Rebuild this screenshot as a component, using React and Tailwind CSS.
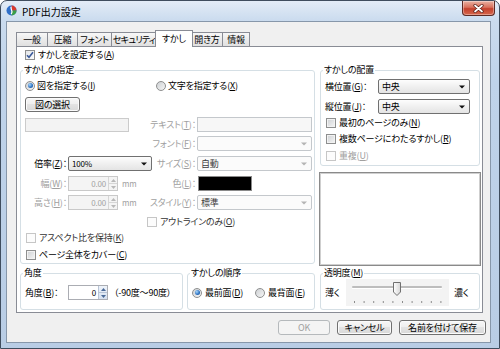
import React from 'react';

const FONT = "font-['Noto_Sans_CJK_JP',sans-serif] [font-feature-settings:'palt']";

// label with underlined access key, e.g. すかしを設定する(A)
const Mn = ({ t, k, colon }) => (
  <>
    {t}(<span className="underline underline-offset-[1px]">{k}</span>){colon ? '：' : ''}
  </>
);

// right aligned label that may overflow to the left
const Lbl = ({ className, children }) => (
  <div className={`flex shrink-0 justify-end leading-[12px] ${className}`}>
    <span className="shrink-0">{children}</span>
  </div>
);

const Check = ({ on, dim }) => (
  <span
    className={`flex h-[10px] w-[10px] shrink-0 items-center justify-center border ${
      dim
        ? 'border-[#c6c6c6] bg-[#fcfcfc]'
        : on
        ? 'border-[#8e8f8f] bg-[linear-gradient(135deg,#e4e6e8,#fbfbfb)]'
        : 'border-[#8e8f8f] bg-[linear-gradient(135deg,#cdd0d3,#f6f6f6)] shadow-[inset_0_0_0_1px_#f2f2f2]'
    }`}
  >
    {on && (
      <svg width="8" height="8" viewBox="0 0 8 8">
        <path d="M1 4.2 L3 6.3 L7 1.3" stroke="#3b5a9a" strokeWidth="1.6" fill="none" />
      </svg>
    )}
  </span>
);

const Radio = ({ on }) => (
  <span className="flex h-[10px] w-[10px] shrink-0 items-center justify-center rounded-full border border-[#8e8f8f] bg-[linear-gradient(135deg,#cdd0d3,#f6f6f6)]">
    {on && (
      <span className="h-[5px] w-[5px] rounded-full bg-[radial-gradient(circle_at_35%_35%,#a6d6fb,#2a6fc0_60%,#1b4f8f)]" />
    )}
  </span>
);

const Btn = ({ className, dim, children }) => (
  <div
    className={`flex h-[15px] items-center justify-center rounded-[3px] border leading-[12px] ${
      dim
        ? 'border-[#b5b9bc] bg-[#f4f4f4] text-[#a0a0a0]'
        : 'border-[#707070] bg-[linear-gradient(#f7f7f7,#efefef_45%,#e3e3e3_50%,#d8d8d8)] text-black shadow-[inset_0_0_0_1px_#fbfbfb]'
    } ${className}`}
  >
    {children}
  </div>
);

const Arrow = ({ color }) => (
  <svg width="6" height="4" viewBox="0 0 6 4" className="shrink-0">
    <path d="M0 0.5 H6 L3 3.5 Z" fill={color} />
  </svg>
);

const Combo = ({ className, value, dim, small }) => (
  <div
    className={`flex h-[15px] items-center rounded-[2px] border pl-[3px] pr-[4px] ${
      dim
        ? 'border-[#c4c8cc] bg-[#fbfbfb] text-[#3c3c3c]'
        : 'border-[#707070] bg-[linear-gradient(#fdfdfd,#f0f0f0_50%,#e4e4e4)] text-black'
    } ${className}`}
  >
    <span className={`flex-1 leading-[12px] ${small ? 'text-[8px]' : ''}`}>{value}</span>
    <Arrow color={dim ? '#b4b4b4' : '#111'} />
  </div>
);

const Spin = ({ className, value, dim }) => (
  <div
    className={`flex h-[15px] border ${
      dim ? 'border-[#c9c9c9] bg-[#f4f4f4] text-[#a3a3a3]' : 'border-[#abadb3] bg-white text-black'
    } ${className}`}
  >
    <span className="flex-1 pr-[2px] text-right text-[8px] leading-[13px]">{value}</span>
    <span
      className={`flex w-[9px] flex-col border-l ${
        dim ? 'border-[#d6d6d6]' : 'border-[#b8c4d6] bg-[linear-gradient(#eef3fa,#d6e1f0)]'
      }`}
    >
      <span className="flex flex-1 items-center justify-center">
        <svg width="5" height="3" viewBox="0 0 5 3">
          <path d="M0 3 H5 L2.5 0 Z" fill={dim ? '#b8b8b8' : '#4a6a98'} />
        </svg>
      </span>
      <span
        className={`flex flex-1 items-center justify-center border-t ${
          dim ? 'border-[#d6d6d6]' : 'border-[#b8c4d6]'
        }`}
      >
        <svg width="5" height="3" viewBox="0 0 5 3">
          <path d="M0 0 H5 L2.5 3 Z" fill={dim ? '#b8b8b8' : '#4a6a98'} />
        </svg>
      </span>
    </span>
  </div>
);

const Group = ({ title, className, boxClass, children }) => (
  <div className={`flex flex-col ${className}`}>
    <div className="relative z-10 ml-[3px] h-[12px] w-fit bg-white px-[1px] leading-[12px]">{title}</div>
    <div className={`-mt-[6px] rounded-[3px] border border-[#d5dfe5] ${boxClass}`}>{children}</div>
  </div>
);

const Tab = ({ className, on, children }) => (
  <div
    className={`flex items-center justify-center overflow-hidden border border-b-0 border-[#898c95] leading-[12px] ${
      on ? 'relative z-10 -mb-px h-[17px] bg-white' : 'h-[14px] bg-[linear-gradient(#f7f7f7,#ebebeb_50%,#e0e0e0)]'
    } ${className}`}
  >
    {children}
  </div>
);

const Slider = () => {
  const ticks = [8, 17.6, 27.2, 36.8, 46.4, 56, 65.6, 75.2, 84.8, 94.4];
  return (
    <svg width="103" height="27" viewBox="0 0 103 27" className="shrink-0">
      <rect x="0" y="0" width="103" height="27" fill="#f3f3f3" />
      <rect x="6" y="7" width="90" height="2" rx="1" fill="#bdbdbd" />
      <rect x="6" y="9" width="90" height="1" fill="#ffffff" />
      {ticks.map((t) => (
        <rect key={t} x={t} y="22" width="1" height="2" fill="#8c8c8c" />
      ))}
      <defs>
        <linearGradient id="th" x1="0" y1="0" x2="1" y2="0">
          <stop offset="0" stopColor="#ffffff" />
          <stop offset="1" stopColor="#d6d6d6" />
        </linearGradient>
      </defs>
      <path d="M47.5 3.5 H54.5 V13 L51 16.5 L47.5 13 Z" fill="url(#th)" stroke="#707070" />
    </svg>
  );
};

const App = () => {
  return (
    <div className="h-[349px] w-[500px] overflow-hidden bg-white">
      <div
        className={`flex h-[349px] w-[500px] flex-col whitespace-nowrap rounded-t-[7px] border border-[#3f4d5e] bg-[linear-gradient(#e3ecf7,#cadbee_20px,#bfd3ea_80px,#b9cde5)] text-[9px] tracking-[-0.2px] text-black ${FONT}`}
      >
        {/* title bar */}
        <div className="flex h-[20px] shrink-0 items-start">
          <svg width="11" height="11" viewBox="0 0 11 11" className="ml-[5px] mt-[4px]">
            <circle cx="5.5" cy="5.5" r="5" fill="#2f6fc9" />
            <path d="M5.5 0.5 A5 5 0 0 1 10.5 5.5 L5.5 5.5 Z" fill="#d8392e" />
            <path d="M10.5 5.5 A5 5 0 0 1 5.5 10.5 L5.5 5.5 Z" fill="#3a9e47" />
            <path d="M5.5 1.8 C3.2 3.2 7.8 5 5.2 9.2" stroke="#fff" strokeWidth="1.3" fill="none" />
          </svg>
          <span className="ml-[5px] mt-[5px] text-[10px] leading-[12px] tracking-normal">PDF出力設定</span>
          <div className="ml-auto mr-[4px] flex h-[15px] w-[33px] items-center justify-center rounded-b-[4px] border border-t-0 border-[#5d2a24] bg-[linear-gradient(#eab2a3,#d8705c_45%,#c4412d_55%,#d6674c)] shadow-[inset_0_0_0_1px_rgba(255,255,255,0.35)]">
            <svg width="11" height="9" viewBox="0 0 11 9">
              <path d="M2 1.5 L9 7.5 M9 1.5 L2 7.5" stroke="#5b2018" strokeWidth="3.2" strokeLinecap="round" />
              <path d="M2 1.5 L9 7.5 M9 1.5 L2 7.5" stroke="#fff" strokeWidth="1.7" strokeLinecap="round" />
            </svg>
          </div>
        </div>

        {/* client area */}
        <div className="ml-[5px] flex h-[322px] w-[485px] flex-col border border-[#8797aa] bg-[#f0f0f0] pt-[8px]">
          {/* tabs */}
          <div className="ml-[9px] flex h-[16px] items-end">
            <Tab className="w-[32px]">一般</Tab>
            <Tab className="-ml-px w-[31px]">圧縮</Tab>
            <Tab className="-ml-px w-[35px]">フォント</Tab>
            <Tab className="-ml-px w-[46px] tracking-[-0.7px]">セキュリティ</Tab>
            <Tab on className="-ml-[2px] -mr-px w-[38px]">すかし</Tab>
            <Tab className="-ml-px w-[32px]">開き方</Tab>
            <Tab className="-ml-px w-[28px]">情報</Tab>
          </div>

          {/* tab page */}
          <div className="ml-[9px] flex h-[267px] w-[467px] flex-col border border-[#898c95] bg-white">
            <div className="flex h-[15px] items-center gap-[3px] pl-[8px]">
              <Check on />
              <span className="leading-[12px]">
                <Mn t="すかしを設定する" k="A" />
              </span>
            </div>

            <div className="mt-[2px] flex pl-[3px]">
              {/* すかしの指定 */}
              <Group title="すかしの指定" className="w-[295px]" boxClass="h-[194px] pt-[8px]">
                <div className="flex h-[13px] items-center">
                  <div className="flex w-[133px] items-center gap-[2px] pl-[4px]">
                    <Radio on />
                    <span className="leading-[12px]">
                      <Mn t="図を指定する" k="I" />
                    </span>
                  </div>
                  <div className="flex items-center gap-[2px] pl-[2px]">
                    <Radio />
                    <span className="leading-[12px]">
                      <Mn t="文字を指定する" k="X" />
                    </span>
                  </div>
                </div>

                <div className="mt-[5px] flex pl-[4px]">
                  <Btn className="w-[55px]">図の選択</Btn>
                </div>

                <div className="mt-[5px] flex h-[15px] items-center">
                  <div className="w-[133px] pl-[4px]">
                    <div className="h-[14px] w-[104px] border border-[#cbcbcb] bg-[#f3f3f3]" />
                  </div>
                  <Lbl className="w-[43px] pr-[1px] text-[#a0a0a0]">
                    <Mn t="テキスト" k="T" colon />
                  </Lbl>
                  <div className="h-[15px] w-[115px] border border-[#c4c8cc] bg-[#f7f7f7]" />
                </div>

                <div className="mt-[4px] flex h-[15px] items-center">
                  <div className="w-[133px]" />
                  <Lbl className="w-[43px] pr-[1px] text-[#a0a0a0]">
                    <Mn t="フォント" k="F" colon />
                  </Lbl>
                  <Combo dim className="w-[115px]" value="" />
                </div>

                <div className="mt-[5px] flex h-[15px] items-center">
                  <div className="flex w-[133px] items-center pl-[4px]">
                    <Lbl className="w-[42px]">
                      <Mn t="倍率" k="Z" colon />
                    </Lbl>
                    <Combo small className="ml-[1px] w-[84px]" value="100%" />
                  </div>
                  <Lbl className="w-[43px] pr-[1px] text-[#a0a0a0]">
                    <Mn t="サイズ" k="S" colon />
                  </Lbl>
                  <Combo dim className="w-[115px]" value="自動" />
                </div>

                <div className="mt-[5px] flex h-[15px] items-center">
                  <div className="flex w-[133px] items-center pl-[4px]">
                    <Lbl className="w-[42px] text-[#a0a0a0]">
                      <Mn t="幅" k="W" colon />
                    </Lbl>
                    <Spin dim className="ml-[1px] w-[50px]" value="0.00" />
                    <span className="ml-[4px] text-[8px] leading-[12px] text-[#a0a0a0]">mm</span>
                  </div>
                  <Lbl className="w-[43px] pr-[1px] text-[#a0a0a0]">
                    <Mn t="色" k="L" colon />
                  </Lbl>
                  <div className="ml-[1px] h-[15px] w-[54px] border border-[#8a8a8a] bg-black" />
                </div>

                <div className="mt-[4px] flex h-[15px] items-center">
                  <div className="flex w-[133px] items-center pl-[4px]">
                    <Lbl className="w-[42px] text-[#a0a0a0]">
                      <Mn t="高さ" k="H" colon />
                    </Lbl>
                    <Spin dim className="ml-[1px] w-[50px]" value="0.00" />
                    <span className="ml-[4px] text-[8px] leading-[12px] text-[#a0a0a0]">mm</span>
                  </div>
                  <Lbl className="w-[43px] pr-[1px] text-[#a0a0a0]">
                    <Mn t="スタイル" k="Y" colon />
                  </Lbl>
                  <Combo dim className="w-[115px]" value="標準" />
                </div>

                <div className="mt-[5px] flex h-[13px] items-center gap-[3px] pl-[126px]">
                  <Check dim />
                  <span className="leading-[12px] text-[#333]">
                    <Mn t="アウトラインのみ" k="O" />
                  </span>
                </div>

                <div className="mt-[3px] flex h-[13px] items-center gap-[3px] pl-[5px]">
                  <Check dim />
                  <span className="leading-[12px] text-[#333]">
                    <Mn t="アスペクト比を保持" k="K" />
                  </span>
                </div>

                <div className="mt-[4px] flex h-[13px] items-center gap-[3px] pl-[5px]">
                  <Check />
                  <span className="leading-[12px]">
                    <Mn t="ページ全体をカバー" k="C" />
                  </span>
                </div>
              </Group>

              {/* right column */}
              <div className="ml-[5px] flex w-[160px] flex-col">
                <Group title="すかしの配置" boxClass="h-[96px] pt-[8px]">
                  <div className="flex h-[15px] items-center pl-[4px]">
                    <span className="flex-1 leading-[12px]">
                      <Mn t="横位置" k="G" colon />
                    </span>
                    <Combo className="mr-[9px] w-[92px]" value="中央" />
                  </div>
                  <div className="mt-[5px] flex h-[15px] items-center pl-[4px]">
                    <span className="flex-1 leading-[12px]">
                      <Mn t="縦位置" k="J" colon />
                    </span>
                    <Combo className="mr-[9px] w-[92px]" value="中央" />
                  </div>
                  <div className="mt-[2px] flex h-[13px] items-center gap-[3px] pl-[5px]">
                    <Check />
                    <span className="leading-[12px]">
                      <Mn t="最初のページのみ" k="N" />
                    </span>
                  </div>
                  <div className="mt-[3px] flex h-[13px] items-center gap-[3px] pl-[5px]">
                    <Check />
                    <span className="leading-[12px]">
                      <Mn t="複数ページにわたるすかし" k="R" />
                    </span>
                  </div>
                  <div className="mt-[4px] flex h-[13px] items-center gap-[3px] pl-[5px]">
                    <Check dim />
                    <span className="leading-[12px] text-[#a0a0a0]">
                      <Mn t="重複" k="U" />
                    </span>
                  </div>
                </Group>
                <div className="-ml-px mt-[6px] h-[94px] w-[162px] border border-[#8a8a8a] bg-white shadow-[inset_0_0_0_1px_#cfcfcf]" />
              </div>
            </div>

            {/* bottom groups */}
            <div className="mt-[1px] flex pl-[3px]">
              <Group title="角度" className="w-[163px]" boxClass="h-[37px] pt-[11px]">
                <div className="flex h-[15px] items-center pl-[4px]">
                  <span className="w-[42px] leading-[12px]">
                    <Mn t="角度" k="B" colon />
                  </span>
                  <Spin className="ml-[1px] h-[14px] w-[40px]" value="0" />
                  <span className="ml-[6px] leading-[12px]">（-90度～90度）</span>
                </div>
              </Group>

              <Group title="すかしの順序" className="ml-[4px] w-[128px]" boxClass="h-[37px] pt-[11px]">
                <div className="flex h-[15px] items-center pl-[4px]">
                  <div className="flex w-[63px] items-center gap-[3px]">
                    <Radio on />
                    <span className="leading-[12px]">
                      <Mn t="最前面" k="D" />
                    </span>
                  </div>
                  <div className="flex items-center gap-[3px]">
                    <Radio />
                    <span className="leading-[12px]">
                      <Mn t="最背面" k="E" />
                    </span>
                  </div>
                </div>
              </Group>

              <Group title={<Mn t="透明度" k="M" />} className="ml-[5px] w-[160px]" boxClass="h-[37px] pt-[5px]">
                <div className="flex h-[27px] items-center pl-[4px]">
                  <span className="w-[21px] leading-[12px]">薄く</span>
                  <Slider />
                  <span className="ml-[5px] leading-[12px]">濃く</span>
                </div>
              </Group>
            </div>
          </div>

          {/* dialog buttons */}
          <div className="mt-[7px] flex justify-end gap-[7px] pr-[4px]">
            <Btn dim className="w-[52px]">OK</Btn>
            <Btn className="w-[55px]">キャンセル</Btn>
            <Btn className="w-[87px]">名前を付けて保存</Btn>
          </div>
        </div>
      </div>
    </div>
  );
};

export default App;
